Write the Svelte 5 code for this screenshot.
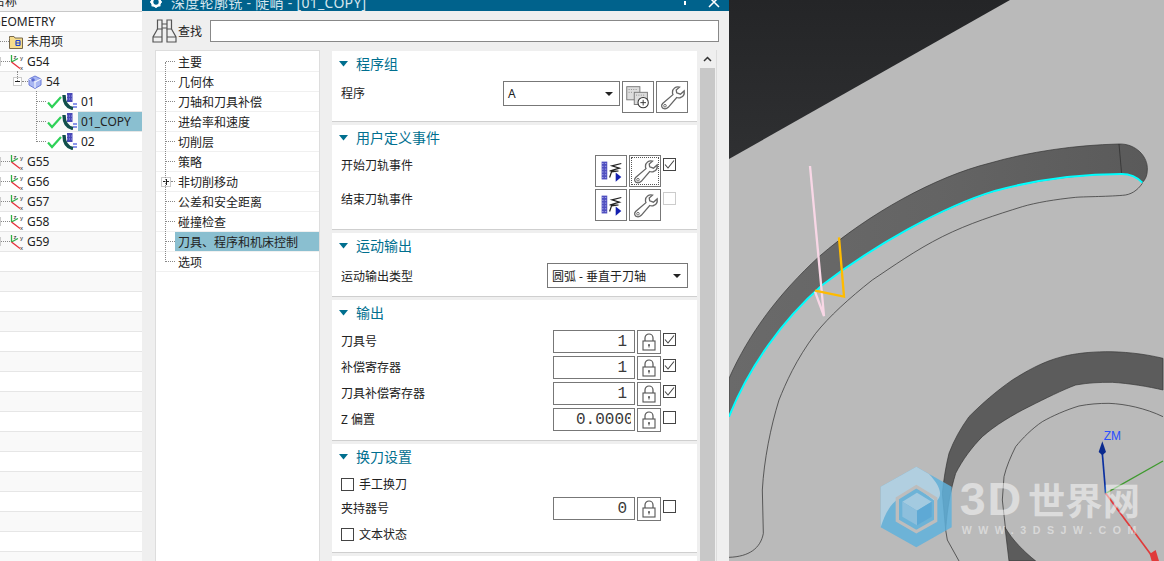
<script>
  const treeRows = [
    { kind: 'root', text: 'GEOMETRY' },
    { kind: 'folder', text: '未用项' },
    { kind: 'mcs', text: 'G54', box: true },
    { kind: 'geom', text: '54' },
    { kind: 'op', text: '01' },
    { kind: 'op', text: '01_COPY', selected: true },
    { kind: 'op', text: '02' },
    { kind: 'mcs', text: 'G55', box: true },
    { kind: 'mcs', text: 'G56', box: true },
    { kind: 'mcs', text: 'G57', box: true },
    { kind: 'mcs', text: 'G58', box: true },
    { kind: 'mcs', text: 'G59', box: true },
    ...Array.from({ length: 16 }, () => ({ kind: 'empty', text: '' }))
  ];
  const navRows = ['主要', '几何体', '刀轴和刀具补偿', '进给率和速度', '切削层', '策略', '非切削移动', '公差和安全距离', '碰撞检查', '刀具、程序和机床控制', '选项'];
  const outputRows = [
    { label: '刀具号', value: '1', on: true },
    { label: '补偿寄存器', value: '1', on: true },
    { label: '刀具补偿寄存器', value: '1', on: true },
    { label: 'Z 偏置', value: '0.00000', on: false, clip: true }
  ];
</script>

{#snippet wrench()}
  <svg class="ico32" viewBox="0 0 32 32"><path d="M24 5.500C20 4.500 16.500 7 16.500 11C16.500 12.500 17 13.500 17 13.500L6 23C4 25 5 28 7.500 28.500C9.500 29 11 28 12 27L21 16.500C22 17 23 17 24.500 16.800C28 16 29.500 13 29 9.500L25 13L21 11.500L20.500 8.500Z" fill="#fff" stroke="#666" stroke-width="1.400"/><circle cx="8.500" cy="25.300" r="1.400" fill="none" stroke="#666"/></svg>
{/snippet}
{#snippet eventIcon()}
  <svg class="ico32" viewBox="0 0 32 32">
    <rect x="6" y="6" width="6" height="19" fill="#4f4fc0"/>
    <path d="M6.500 8h5M6.500 11h5M6.500 14h5M6.500 17h5M6.500 20h5M6.500 23h5" stroke="#a8a8e6" stroke-dasharray="1.500 1.500"/>
    <path d="M27 8L17 10.500L25 13L14.500 16H24L16.500 17L14.500 23" fill="none" stroke="#222" stroke-width="1.300"/>
    <path d="M21 17.500L27 22.500L21 27.500Z" fill="#1420b0"/>
  </svg>
{/snippet}
{#snippet lock()}
  <span class="lockbtn"><svg width="14" height="18" viewBox="0 0 14 18"><path d="M3 8V5a4 4 0 0 1 8 0v3" fill="none" stroke="#555" stroke-width="1.200"/><rect x="1" y="8" width="12" height="9" fill="#fff" stroke="#555" stroke-width="1.100"/><circle cx="7" cy="12" r="1" fill="#555"/><path d="M7 12v2.500" stroke="#555"/></svg></span>
{/snippet}
{#snippet check(on, cls = '')}
  <span class="cb {cls}">
    {#if on}<svg width="13" height="13" viewBox="0 0 13 13"><path d="M2 6.500L5 10L11 2.500" fill="none" stroke="#444" stroke-width="1.100"/></svg>{/if}
  </span>
{/snippet}
{#snippet mcsIcon()}
  <svg class="ti" viewBox="0 0 14 17">
    <path d="M1.500 9V2M1.500 9L8 5.500" stroke="#2fae46" fill="none" stroke-width="1.300"/>
    <path d="M1.500 9L10 15.500" stroke="#e8303c" fill="none" stroke-width="1.300"/>
    <text x="3.500" y="5.500" class="axis">z</text><text x="10" y="7" class="axis">y</text><text x="10" y="17" class="axis">x</text>
  </svg>
{/snippet}
{#snippet section(title)}
  <div class="sechead"><svg width="9" height="6" viewBox="0 0 9 6"><path d="M0 0H9L4.500 5.500Z" fill="#006f8f"/></svg><span>{title}</span></div>
{/snippet}

<div class="app">
  <aside class="tree">
    <div class="thead"><span>名称</span></div>
    {#each treeRows as r}
      <div class="trow {r.kind}">
        {#if r.kind === 'root'}
          <span class="tx">{r.text}</span>
        {:else if r.kind === 'folder'}
          <span class="dots w8"></span>
          <svg class="ti" viewBox="0 0 14 14"><path d="M.5 3.500V1.500H5L6 3H13.500V13.500H.5Z" fill="#f6dc8c" stroke="#77684a"/><path d="M7 5.500h4M7 8h4M7 10.500h4M7 5.500v5M11 5.500v5" stroke="#2244cc" stroke-width="1.200" fill="none"/></svg>
          <span class="tx">{r.text}</span>
        {:else if r.kind === 'mcs'}
          <span class="exp clip"></span>
          <span class="dots w8"></span>
          {@render mcsIcon()}
          <span class="tx">{r.text}</span>
        {:else if r.kind === 'geom'}
          <span class="exp"><i></i></span>
          <span class="dots w6"></span>
          <svg class="ti" viewBox="0 0 14 14"><path d="M1 4L7 1L13 4V10L7 13.500L1 10Z" fill="#a9b7f2" stroke="#6a7bd8"/><path d="M7 7V13M1 4L7 7L13 4" stroke="#fff" fill="none"/><circle cx="5" cy="5" r="1.800" fill="#5a68cf"/></svg>
          <span class="tx">{r.text}</span>
        {:else if r.kind === 'op'}
          <span class="dots w10"></span>
          <svg class="tick" viewBox="0 0 15 14"><path d="M1 7.500L5 12L14 2" fill="none" stroke="#2fd158" stroke-width="2.200"/></svg>
          <svg class="opicon" viewBox="0 0 15 17"><path d="M2 2C2 10 5.500 14.500 11 15.500" fill="none" stroke="#134f4c" stroke-width="3.400"/><rect x="5" y="0" width="5.500" height="9" fill="#4a4ab8"/><path d="M5 3h5.500M5 6h5.500" stroke="#9a9ae0" stroke-dasharray="1 1"/><path d="M11 11h4M11 14h4" stroke="#1a30d8" stroke-width="1.200"/></svg>
          <span class="tx oplabel" class:sel={r.selected}>{r.text}</span>
        {/if}
      </div>
    {/each}
    <span class="vl v17"></span>
    <span class="vl v36"></span>
  </aside>

  <main class="dialog">
    <header class="titlebar">
      <svg width="12" height="12" viewBox="0 0 12 12"><circle cx="6" cy="6" r="4" fill="none" stroke="#fff" stroke-width="2.600"/><path d="M6 0V2M6 10V12M0 6H2M10 6H12M1.700 1.700L3 3M9 9L10.300 10.300M1.700 10.300L3 9M9 3L10.300 1.700" stroke="#fff" stroke-width="1.500"/></svg>
      <span class="ttext">深度轮廓铣 - 陡峭 - [01_COPY]</span>
      <span class="tspace"></span>
      <span class="kebab"></span>
      <svg class="close" width="12" height="12" viewBox="0 0 12 12"><path d="M1 1L11 11M11 1L1 11" stroke="#fff" stroke-width="1.500"/></svg>
    </header>

    <div class="search">
      <svg width="25" height="24" viewBox="0 0 25 24" fill="none" stroke="#555" stroke-width="1.200"><path d="M5.500 1H10V10H5.500ZM15 1H19.500V10H15ZM10 5H15M10 9H15"/><path d="M5.500 10L1 18V23H10V10M19.500 10L24 18V23H15V10M1 18H10M15 18H24"/></svg>
      <span class="slabel">查找</span>
      <span class="sinput"></span>
    </div>

    <div class="content">
      <nav class="nav">
        {#each navRows as n, i}
          <div class="nrow" class:sel={i === 9}>
            {#if i === 6}<span class="plus"></span><span class="dots w4"></span>{:else}<span class="dots w9"></span>{/if}
            <span class="ntext">{n}</span>
          </div>
        {/each}
        <span class="nvl"></span>
      </nav>

      <div class="sections">
        <section class="sec s1">
          {@render section('程序组')}
          <div class="row top">
            <span class="lab ddlab">程序</span>
            <span class="dd w117"><span>A</span><i></i></span>
            <span class="btn"><svg class="ico32" viewBox="0 0 32 32"><rect x="4" y="5" width="14" height="14" fill="#ddd" stroke="#777"/><rect x="12" y="11" width="14" height="13" fill="#ddd" stroke="#777"/><path d="M6 8h10M6 11h4M14 14h10" stroke="#888" stroke-dasharray="1 1.500"/><circle cx="21.500" cy="22" r="5.500" fill="#fff" stroke="#333" stroke-width="1.100"/><path d="M18.500 22h6M21.500 19v6" stroke="#333"/></svg></span>
            <span class="btn">{@render wrench()}</span>
          </div>
        </section>

        <section class="sec s2">
          {@render section('用户定义事件')}
          <div class="row top">
            <span class="lab">开始刀轨事件</span>
            <span class="btn">{@render eventIcon()}</span>
            <span class="btn focus">{@render wrench()}</span>
            {@render check(true, 'edge')}
          </div>
          <div class="row top">
            <span class="lab">结束刀轨事件</span>
            <span class="btn">{@render eventIcon()}</span>
            <span class="btn">{@render wrench()}</span>
            {@render check(false, 'edge off')}
          </div>
        </section>

        <section class="sec s3">
          {@render section('运动输出')}
          <div class="row">
            <span class="lab">运动输出类型</span>
            <span class="dd w141"><span>圆弧 - 垂直于刀轴</span><i></i></span>
          </div>
        </section>

        <section class="sec s4">
          {@render section('输出')}
          {#each outputRows as o}
            <div class="row frow">
              <span class="lab">{o.label}</span>
              <span class="num" class:clip={o.clip}><span>{o.value}</span></span>
              {@render lock()}
              {@render check(o.on, 'edge')}
            </div>
          {/each}
        </section>

        <section class="sec s5">
          {@render section('换刀设置')}
          <label class="toggle t1">{@render check(false)}<span>手工换刀</span></label>
          <div class="row frow">
            <span class="lab">夹持器号</span>
            <span class="num"><span>0</span></span>
            {@render lock()}
            {@render check(false, 'edge')}
          </div>
          <label class="toggle t2">{@render check(false)}<span>文本状态</span></label>
        </section>

        <section class="sec s6"></section>
      </div>

      <div class="scroll">
        <span class="up"><svg width="9" height="6" viewBox="0 0 9 6"><path d="M1 5L4.500 1.500L8 5" fill="none" stroke="#333" stroke-width="1.500"/></svg></span>
        <span class="thumb"></span>
      </div>
    </div>
  </main>

  <svg class="viewport" viewBox="0 0 435 561" aria-label="3D viewport">
    <defs>
      <linearGradient id="dark" x1="0" y1="0" x2="0" y2="1"><stop offset="0" stop-color="#242527"/><stop offset="1" stop-color="#2f3032"/></linearGradient>
      <linearGradient id="band" x1="0" y1="0" x2="1" y2="0"><stop offset="0" stop-color="#6a6a6a"/><stop offset=".5" stop-color="#646464"/><stop offset="1" stop-color="#5a5a5a"/></linearGradient>
    </defs>
    <rect width="435" height="561" fill="#bababa"/>
    <path d="M0 159L281 0H0Z" fill="url(#dark)"/>
    <g transform="translate(0 100) scale(.33333)">
      <path d="M0 835C60 700 150 580 270 470C420 340 620 230 780 190C900 155 1040 135 1170 132C1220 130 1258 170 1255 210C1255 225 1250 238 1240 248C1225 232 1205 222 1178 222C1040 222 900 245 800 272C640 320 430 440 280 555C160 660 60 800 0 950Z" fill="url(#band)" stroke="#333" stroke-width="2"/>
      <path d="M1170 132L1178 222" stroke="#333" stroke-width="2.500"/>
      <path d="M1240 248C1225 232 1205 222 1178 222C1040 222 900 245 800 272C640 320 430 440 280 555C160 660 60 800 0 950" fill="none" stroke="#00ffff" stroke-width="6"/>
      <path d="M1240 250C1225 272 1205 285 1180 286C1130 290 1060 290 1040 292C980 298 920 308 880 320C800 345 720 370 640 410C560 450 490 500 430 540C360 595 300 650 260 700C200 780 170 850 150 900C125 980 105 1080 100 1170L103 1300C95 1345 60 1370 0 1372" fill="none" stroke="#333" stroke-width="2.200"/>
      <path d="M1302 775C1240 760 1180 755 1130 755C1080 756 1040 760 1000 770C940 785 890 815 850 840C800 875 760 910 720 950C695 985 675 1020 660 1060C650 1100 644 1140 640 1180L650 1290C655 1220 665 1170 680 1120C700 1080 730 1040 760 1010C800 975 850 945 900 920C950 895 1000 870 1040 855C1080 848 1110 847 1150 847C1200 850 1260 860 1302 870Z" fill="#5c5c5c" stroke="#333" stroke-width="2"/>
      <path d="M650 1290L655 1320L690 1383" fill="none" stroke="#333" stroke-width="2.200"/>
      <path d="M1302 950C1250 925 1190 912 1140 910C1110 910 1080 912 1050 918C1010 930 970 948 940 965C910 985 880 1015 860 1040C845 1070 832 1100 825 1130L820 1200L830 1290" fill="none" stroke="#333" stroke-width="2.200"/>
      <path d="M828 1282C850 1320 885 1355 920 1383H840Z" fill="#5c5c5c" stroke="#333" stroke-width="2"/>
      <path d="M243 198L285 648L258 575" fill="none" stroke="#f8d7e6" stroke-width="7"/>
      <path d="M330 412L345 590L258 572" fill="none" stroke="#ffbb00" stroke-width="7"/>

      <path d="M1130 1180L1120 1060" stroke="#0a2fa0" stroke-width="5"/>
      <path d="M1120 1024L1131 1056L1120 1066L1109 1056Z" fill="#0a2a8e"/>
      <path d="M1130 1180L1302 1083" stroke="#3f9a2f" stroke-width="4"/>
      <path d="M1130 1180L1280 1383" stroke="#e03a3a" stroke-width="5"/>
      <path d="M1262 1362L1280 1350L1290 1383H1268Z" fill="#e03a3a"/>
      <text x="1124" y="1019" class="zm">ZM</text>

      <path d="M562 1100L668 1160V1282L562 1342L455 1282V1160Z" fill="#5fb2dc" opacity=".85"/>
      <path d="M562 1100L600 1122C640 1165 640 1190 620 1205L562 1160L510 1195C480 1215 465 1250 455 1282V1160Z" fill="#c2d6e2" opacity=".8"/>
      <path d="M562 1160L620 1195V1262L562 1295L505 1262V1195Z" fill="none" stroke="#bdbdbd" stroke-width="10"/>
      <path d="M564 1178L608 1205L564 1232L520 1205Z" fill="#a3cae0"/>
      <path d="M520 1205L564 1232V1276L520 1250Z" fill="#8dbfdc"/>
      <path d="M608 1205L564 1232V1276L608 1250Z" fill="#5ea9d5"/>
      <text x="692" y="1244" class="wm"><tspan class="wm3d">3D</tspan><tspan dx="14">世界网</tspan></text>
      <text x="698" y="1301" class="wm2" textLength="524">WWW.3DSJW.COM</text>
    </g>
  </svg>
</div>

<style>
  :global(body) { margin: 0; }
  .app {
    display: flex;
    width: 1164px;
    height: 561px;
    overflow: hidden;
    font-family: "Noto Sans", "Noto Sans CJK SC", sans-serif;
    font-size: 12px;
    color: #222;
    background: #efefef;
  }
  .tree {
    position: relative;
    width: 142px;
    flex: none;
    overflow: hidden;
    background: #fff;
  }
  .thead {
    height: 11px;
    border-bottom: 1px solid #c8c8c8;
    background: #f4f4f4;
    overflow: hidden;
  }
  .thead span { display: block; margin: -7px 0 0 -7px; line-height: 18px; }
  .trow {
    display: flex;
    align-items: center;
    height: 20px;
    box-sizing: border-box;
    border-bottom: 1px solid #e6e6e6;
    white-space: nowrap;
  }
  .trow:nth-child(odd) { background: #f9f9f9; }
  .tx { line-height: 19px; margin-left: 3px; }
  .root .tx { margin-left: -8px; }
  .dots { display: block; height: 0; border-top: 1px dotted #888; flex: none; }
  .w4 { width: 4px; }
  .w6 { width: 6px; }
  .w8 { width: 9px; }
  .w9 { width: 9px; }
  .w10 { width: 10px; }
  .ti { width: 14px; height: 17px; flex: none; }
  .folder .ti { height: 14px; }
  .folder .tx { margin-left: 4px; }
  .geom { padding-left: 13px; }
  .geom .ti { height: 14px; }
  .geom .tx { margin-left: 4px; }
  .mcs .exp { margin-left: -8px; }
  .exp {
    position: relative;
    display: block;
    box-sizing: border-box;
    width: 9px;
    height: 9px;
    flex: none;
    border: 1px solid #ccc;
    background: #fff;
  }
  .exp i { position: absolute; left: 1px; top: 3px; width: 5px; height: 1px; background: #222; }
  .op { padding-left: 36px; }
  .tick { width: 15px; height: 14px; flex: none; margin-left: 1px; }
  .opicon { width: 15px; height: 17px; flex: none; }
  .oplabel { flex: 1; margin-left: 1px; padding-left: 3px; height: 19px; }
  .oplabel.sel { background: #8abfd0; }
  .vl { position: absolute; border-left: 1px dotted #888; }
  .v17 { left: 17px; top: 71px; height: 10px; }
  .v36 { left: 36px; top: 91px; height: 51px; }

  .dialog {
    width: 587px;
    flex: none;
    display: flex;
    flex-direction: column;
    overflow: hidden;
    background: #efefef;
  }
  .titlebar {
    display: flex;
    align-items: center;
    flex: none;
    height: 11px;
    overflow: hidden;
    padding: 0 9px 0 8px;
    background: #00628c;
    color: #d6e6ee;
  }
  .titlebar svg { flex: none; margin-top: -7px; }
  .ttext {
    margin: -6px 0 0 9px;
    font-size: 14px;
    line-height: 18px;
    white-space: nowrap;
    letter-spacing: .3px;
  }
  .tspace { flex: 1; }
  .kebab { width: 2px; height: 4px; margin: -6px 22px 0 0; background: #fff; }
  .search {
    display: flex;
    align-items: center;
    flex: none;
    height: 39px;
    padding: 0 10px 0 10px;
    box-sizing: border-box;
  }
  .slabel { margin-left: 1px; font-size: 12px; }
  .sinput {
    flex: 1;
    height: 20px;
    margin-left: 8px;
    border: 1px solid #888;
    background: #fff;
  }
  .content { display: flex; flex: 1; min-height: 0; padding-left: 13px; }
  .nav {
    position: relative;
    width: 165px;
    flex: none;
    box-sizing: border-box;
    padding-top: 1px;
    border: 1px solid #ddd;
    border-bottom: 0;
    background: #fff;
  }
  .nrow {
    display: flex;
    align-items: center;
    height: 20px;
    box-sizing: border-box;
    padding-left: 10px;
    border-bottom: 1px solid #f0f0f0;
    white-space: nowrap;
  }
  .nrow .ntext { display: block; line-height: 21px; padding-left: 3px; height: 19px; flex: 1; }
  .nrow.sel .ntext { background: #8abfd0; }
  .plus {
    display: block;
    box-sizing: border-box;
    width: 10px;
    height: 10px;
    margin-left: -5px;
    flex: none;
    border: 1px solid #ccc;
    background: linear-gradient(#222, #222) center / 6px 1px no-repeat, linear-gradient(#222, #222) center / 1px 6px no-repeat, #fff;
  }
  .nvl {
    position: absolute;
    left: 9px;
    top: 11px;
    height: 200px;
    border-left: 1px dotted #888;
  }
  .sections {
    display: flex;
    flex-direction: column;
    gap: 3px;
    width: 365px;
    flex: none;
    margin-left: 12px;
    padding-top: 1px;
    overflow: hidden;
  }
  .sec {
    flex: none;
    box-sizing: border-box;
    padding: 0 9px 8px;
    border-bottom: 1px solid #cfcfcf;
    background: #fff;
  }
  .s1 { height: 71px; }
  .s2 { height: 105px; }
  .s3 { height: 64px; }
  .s4 { height: 141px; }
  .s5 { height: 109px; }
  .s6 { height: 20px; border: 0; }
  .sechead {
    display: flex;
    align-items: center;
    height: 30px;
    margin-left: -2px;
    padding-bottom: 5px;
    box-sizing: border-box;
    color: #006f8f;
    font-size: 14px;
  }
  .s1 .sechead { padding-bottom: 4px; }
  .sechead span { margin-left: 8px; line-height: 20px; }
  .row { display: flex; align-items: center; gap: 2px; }
  .row.top { align-items: flex-start; margin-bottom: 2px; }
  .row.top .lab { line-height: 22px; }
  .row.top .lab.ddlab { line-height: 25px; }
  .lab { flex: 1; white-space: nowrap; }
  .dd {
    display: flex;
    align-items: center;
    justify-content: space-between;
    box-sizing: border-box;
    height: 25px;
    padding: 0 6px 0 4px;
    border: 1px solid #777;
    background: #fff;
  }
  .w117 { width: 117px; height: 25px; }
  .w141 { width: 141px; }
  .dd i { width: 0; height: 0; border: 4px solid transparent; border-top: 4px solid #222; border-bottom: 0; }
  .btn {
    display: block;
    box-sizing: border-box;
    width: 32px;
    height: 32px;
    flex: none;
    border: 1px solid #777;
    background: #fff;
  }
  .ico32 { display: block; width: 30px; height: 30px; }
  .focus { outline: 1px dotted #555; outline-offset: -3px; }
  .cb {
    display: block;
    box-sizing: border-box;
    width: 13px;
    height: 13px;
    flex: none;
    border: 1px solid #444;
    background: #fff;
  }
  .cb svg { display: block; margin: -1px; }
  .cb.edge { margin: 3px 12px 0 0; }
  .cb.off { border-color: #ccc; }
  .frow { margin-bottom: 2px; align-items: flex-start; }
  .frow .lab { line-height: 23px; }
  .num {
    display: flex;
    justify-content: flex-end;
    align-items: center;
    box-sizing: border-box;
    width: 82px;
    height: 23px;
    padding-right: 7px;
    border: 1px solid #777;
    background: #fff;
    color: #3a3a3a;
    font-family: "Liberation Mono", monospace;
    font-size: 16px;
  }
  .num span { display: block; overflow: hidden; white-space: nowrap; }
  .num.clip { justify-content: flex-start; padding: 0 3px 0 22px; }
  .lockbtn {
    display: flex;
    align-items: center;
    justify-content: center;
    box-sizing: border-box;
    width: 24px;
    height: 24px;
    flex: none;
    border: 1px solid #777;
    background: #fff;
  }
  .toggle { display: flex; align-items: center; gap: 5px; height: 20px; }
  .t1 { margin-bottom: 3px; }
  .t2 { height: 22px; }
  .scroll {
    display: flex;
    flex-direction: column;
    width: 15px;
    flex: none;
    margin-left: 3px;
    padding-right: 1px;
    border-right: 1px solid #ddd;
  }
  .up {
    display: flex;
    align-items: center;
    justify-content: center;
    flex: none;
    height: 18px;
    background: #efefef;
  }
  .thumb { flex: 1; background: #c8c8c8; }
  .viewport { display: block; width: 435px; height: 561px; flex: none; }
  .axis { font: 6px "Liberation Sans", sans-serif; fill: #222; }
  .wm {
    font-family: "Noto Sans CJK SC", sans-serif;
    font-size: 112px;
    font-weight: 700;
    fill: #fff;
    fill-opacity: .5;
  }
  .wm3d {
    font-family: "Liberation Sans", sans-serif;
    font-size: 140px;
    letter-spacing: 6px;
  }
  .wm2 {
    font-family: "Liberation Sans", sans-serif;
    font-size: 32px;
    font-weight: 700;
    fill: #fff;
    fill-opacity: .45;
  }
  .zm { font-family: "Liberation Sans", sans-serif; font-size: 36px; fill: #2a50ff; }
</style>
